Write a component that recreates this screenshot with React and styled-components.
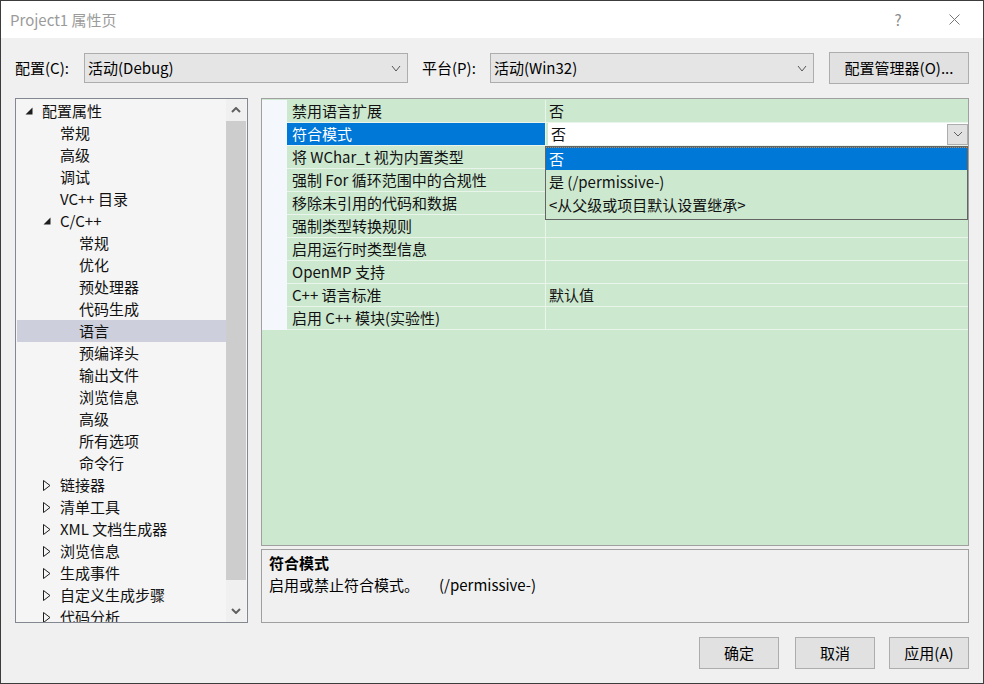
import React from 'react'
import styled, { createGlobalStyle } from 'styled-components'

const GlobalStyle = createGlobalStyle`
  html, body {
    margin: 0;
    padding: 0;
    background: #f0f0f0;
  }
  body {
    font-family: "Noto Sans CJK SC", "Noto Sans", sans-serif;
    font-size: 15px;
    color: #000;
  }
  * {
    box-sizing: border-box;
  }
`

const Window = styled.div`
  width: 984px;
  height: 684px;
  border: 1px solid #3c3c3c;
  background: #f0f0f0;
  display: flex;
  flex-direction: column;
  overflow: hidden;
`

const TitleBar = styled.div`
  height: 37px;
  flex: none;
  background: #fff;
  display: flex;
  align-items: center;
  padding-left: 9px;
`

const Title = styled.div`
  flex: 1;
  color: #9b9b9b;
  font-size: 15px;
  line-height: 20px;
`

const Help = styled.div`
  width: 30px;
  color: #8c8c8c;
  font-size: 15px;
  line-height: 20px;
  text-align: center;
`

const CloseBox = styled.div`
  width: 58px;
  display: flex;
  justify-content: center;
  margin-left: 12px;
  margin-right: 0;
`

const Toolbar = styled.div`
  height: 32px;
  margin: 14px 14px 0 14px;
  display: flex;
  align-items: center;
  flex: none;
`

const Label = styled.div`
  width: ${(p) => p.width}px;
  flex: none;
  line-height: 20px;
`

const Combo = styled.div`
  width: 325px;
  height: 30px;
  border: 1px solid #adadad;
  background: #e5e5e5;
  display: flex;
  align-items: center;
  padding: 0 6px 0 3px;
  margin-right: ${(p) => p.gap || 0}px;
  line-height: 20px;
  span {
    flex: 1;
  }
`

const Button = styled.div`
  width: ${(p) => p.width || 80}px;
  height: 32px;
  flex: none;
  border: 1px solid #adadad;
  background: #e1e1e1;
  display: flex;
  align-items: center;
  justify-content: center;
  margin-left: ${(p) => p.offset || 0}px;
  line-height: 20px;
`

const Main = styled.div`
  height: 525px;
  margin: 14px 14px 0 14px;
  display: flex;
  gap: 13px;
  flex: none;
`

const Tree = styled.div`
  width: 233px;
  flex: none;
  border: 1px solid #828790;
  background: #f5f5f5;
  display: flex;
  overflow: hidden;
`

const TreeList = styled.div`
  flex: 1;
  padding: 1px 0 0 1px;
  overflow: hidden;
`

const TreeRow = styled.div`
  height: 22px;
  display: flex;
  align-items: center;
  padding-left: ${(p) => 8 + Math.floor(p.level * 18.5)}px;
  background: ${(p) => (p.selected ? '#cdd0dc' : 'transparent')};
  line-height: 20px;
  white-space: nowrap;
  color: #111;
`

const ArrowSlot = styled.div`
  width: 17px;
  flex: none;
  display: flex;
  align-items: center;
`

const Scrollbar = styled.div`
  width: 20px;
  flex: none;
  background: #f0f0f0;
  display: flex;
  flex-direction: column;
  margin-right: 1px;
`

const ScrollButton = styled.div`
  height: 22px;
  flex: none;
  display: flex;
  align-items: center;
  justify-content: center;
`

const Thumb = styled.div`
  height: 459px;
  flex: none;
  background: #cdcdcd;
`

const ScrollGap = styled.div`
  flex: 1;
`

const RightColumn = styled.div`
  flex: 1;
  display: flex;
  flex-direction: column;
  gap: 3px;
`

const Grid = styled.div`
  position: relative;
  height: 448px;
  flex: none;
  border: 1px solid #a0a0a0;
  padding-top: 1px;
  background: #cce8cf;
`

const GridRow = styled.div`
  height: 23px;
  display: flex;
  border-bottom: 1px solid #e9f4eb;
  line-height: 20px;
`

const Gutter = styled.div`
  width: 25px;
  flex: none;
  background: #f4f7fc;
  margin-bottom: -1px;
`

const NameCell = styled.div`
  width: 259px;
  flex: none;
  display: flex;
  align-items: center;
  padding-left: 5px;
  border-right: 1px solid #e9f4eb;
  background: ${(p) => (p.selected ? '#0078d7' : 'transparent')};
  color: ${(p) => (p.selected ? '#fff' : '#111')};
  white-space: nowrap;
`

const ValueCell = styled.div`
  flex: 1;
  display: flex;
  align-items: center;
  padding-left: 3px;
  color: #111;
`

const EditBox = styled.div`
  flex: 1;
  height: 22px;
  display: flex;
  align-items: center;
  background: #fff;
  margin-left: -1px;
  padding-left: 3px;
  span {
    flex: 1;
  }
`

const DropButton = styled.div`
  width: 21px;
  height: 21px;
  border: 1px solid #adadad;
  background: #e1e1e1;
  display: flex;
  align-items: center;
  justify-content: center;
`

const DropList = styled.div`
  position: absolute;
  left: 283px;
  top: 47px;
  width: 423px;
  height: 74px;
  border: 1px solid #646464;
  background: #cce8cf;
  line-height: 20px;
`

const DropItem = styled.div`
  height: 23px;
  display: flex;
  align-items: center;
  padding-left: 3px;
  background: ${(p) => (p.active ? '#0078d7' : 'transparent')};
  color: ${(p) => (p.active ? '#fff' : '#111')};
  border-top: ${(p) => (p.active ? '1px dotted #d9822b' : 'none')};
`

const Description = styled.div`
  flex: 1;
  border: 1px solid #a0a0a0;
  background: #f0f0f0;
  padding: 2px 7px;
  line-height: 22px;
`

const DescTitle = styled.div`
  font-weight: bold;
`

const Hint = styled.span`
  margin-left: 20px;
`

const Footer = styled.div`
  height: 32px;
  margin: 14px 14px 0 14px;
  display: flex;
  justify-content: flex-end;
  flex: none;
`

const Chevron = ({ dir = 'down', w = 8, h = 5, color = '#555', stroke = 1 }) => (
  <svg width={w + 2} height={h + 2} viewBox={`-1 -1 ${w + 2} ${h + 2}`}>
    <polyline
      points={dir === 'down' ? `0,0 ${w / 2},${h} ${w},0` : `0,${h} ${w / 2},0 ${w},${h}`}
      fill="none"
      stroke={color}
      strokeWidth={stroke}
    />
  </svg>
)

const TreeArrow = ({ open }) =>
  open ? (
    <svg width="8" height="8" viewBox="0 0 8 8">
      <polygon points="7.5,0.5 7.5,7.5 0.5,7.5" fill="#1e1e1e" />
    </svg>
  ) : (
    <svg width="8" height="11" viewBox="0 0 8 11">
      <polygon points="0.5,0.5 7,5.5 0.5,10.5" fill="none" stroke="#1e1e1e" strokeWidth="1" />
    </svg>
  )

const treeItems = [
  { label: '配置属性', level: 0, arrow: 'open' },
  { label: '常规', level: 1 },
  { label: '高级', level: 1 },
  { label: '调试', level: 1 },
  { label: 'VC++ 目录', level: 1 },
  { label: 'C/C++', level: 1, arrow: 'open' },
  { label: '常规', level: 2 },
  { label: '优化', level: 2 },
  { label: '预处理器', level: 2 },
  { label: '代码生成', level: 2 },
  { label: '语言', level: 2, selected: true },
  { label: '预编译头', level: 2 },
  { label: '输出文件', level: 2 },
  { label: '浏览信息', level: 2 },
  { label: '高级', level: 2 },
  { label: '所有选项', level: 2 },
  { label: '命令行', level: 2 },
  { label: '链接器', level: 1, arrow: 'closed' },
  { label: '清单工具', level: 1, arrow: 'closed' },
  { label: 'XML 文档生成器', level: 1, arrow: 'closed' },
  { label: '浏览信息', level: 1, arrow: 'closed' },
  { label: '生成事件', level: 1, arrow: 'closed' },
  { label: '自定义生成步骤', level: 1, arrow: 'closed' },
  { label: '代码分析', level: 1, arrow: 'closed' },
]

const properties = [
  { name: '禁用语言扩展', value: '否' },
  { name: '符合模式', value: '否', selected: true },
  { name: '将 WChar_t 视为内置类型', value: '' },
  { name: '强制 For 循环范围中的合规性', value: '' },
  { name: '移除未引用的代码和数据', value: '' },
  { name: '强制类型转换规则', value: '' },
  { name: '启用运行时类型信息', value: '' },
  { name: 'OpenMP 支持', value: '' },
  { name: 'C++ 语言标准', value: '默认值' },
  { name: '启用 C++ 模块(实验性)', value: '' },
]

const options = ['否', '是 (/permissive-)', '<从父级或项目默认设置继承>']

const App = () => {
  return (
    <Window>
      <GlobalStyle />
      <TitleBar>
        <Title>Project1 属性页</Title>
        <Help>?</Help>
        <CloseBox>
          <svg width="11" height="11" viewBox="0 0 11 11">
            <path d="M0.5 0.5 L10.5 10.5 M10.5 0.5 L0.5 10.5" stroke="#777" strokeWidth="1" />
          </svg>
        </CloseBox>
      </TitleBar>

      <Toolbar>
        <Label width={69}>配置(C):</Label>
        <Combo gap={14}>
          <span>活动(Debug)</span>
          <Chevron />
        </Combo>
        <Label width={68}>平台(P):</Label>
        <Combo>
          <span>活动(Win32)</span>
          <Chevron />
        </Combo>
        <Button width={140} offset={15}>配置管理器(O)...</Button>
      </Toolbar>

      <Main>
        <Tree>
          <TreeList>
            {treeItems.map((item, i) => (
              <TreeRow key={i} level={item.level} selected={item.selected}>
                <ArrowSlot>{item.arrow && <TreeArrow open={item.arrow === 'open'} />}</ArrowSlot>
                {item.label}
              </TreeRow>
            ))}
          </TreeList>
          <Scrollbar>
            <ScrollButton>
              <Chevron dir="up" w={8} h={4} color="#606060" stroke={2} />
            </ScrollButton>
            <Thumb />
            <ScrollGap />
            <ScrollButton>
              <Chevron dir="down" w={8} h={4} color="#606060" stroke={2} />
            </ScrollButton>
          </Scrollbar>
        </Tree>

        <RightColumn>
          <Grid>
            {properties.map((prop, i) => (
              <GridRow key={i}>
                <Gutter />
                <NameCell selected={prop.selected}>{prop.name}</NameCell>
                <ValueCell>
                  {prop.selected ? (
                    <EditBox>
                      <span>{prop.value}</span>
                      <DropButton>
                        <Chevron w={8} h={4} color="#606060" />
                      </DropButton>
                    </EditBox>
                  ) : (
                    prop.value
                  )}
                </ValueCell>
              </GridRow>
            ))}
            <DropList>
              {options.map((opt, i) => (
                <DropItem key={i} active={i === 0}>
                  {opt}
                </DropItem>
              ))}
            </DropList>
          </Grid>
          <Description>
            <DescTitle>符合模式</DescTitle>
            <div>
              启用或禁止符合模式。<Hint>(/permissive-)</Hint>
            </div>
          </Description>
        </RightColumn>
      </Main>

      <Footer>
        <Button>确定</Button>
        <Button offset={16}>取消</Button>
        <Button offset={14}>应用(A)</Button>
      </Footer>
    </Window>
  )
}

export default App
